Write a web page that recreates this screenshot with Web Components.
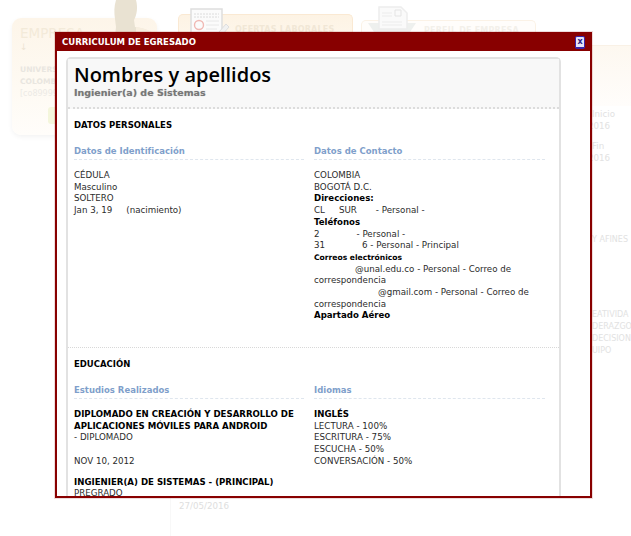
<!DOCTYPE html>
<html lang="es"><head><meta charset="utf-8"><title>Curriculum</title>
<style>
html,body{margin:0;padding:0;background:#fff}
body{width:631px;height:536px;position:relative;overflow:hidden;font:8.7px/11.7px "DejaVu Sans",Verdana,sans-serif;color:#2b2b2b}
b{color:#000;font-size:8.6px}
b.small{font-size:7.6px}
</style></head><body>
<bg-page></bg-page>
<cv-dialog heading="CURRICULUM DE EGRESADO">
  <cv-head name="Nombres y apellidos" title-text="Ingienier(a) de Sistemas"></cv-head>
  <cv-section heading="DATOS PERSONALES" dotted>
    <cv-col heading="Datos de Identificación">
      <div>CÉDULA</div><div>Masculino</div><div>SOLTERO</div>
      <div>Jan 3, 19<gap-x w="14"></gap-x>(nacimiento)</div>
    </cv-col>
    <cv-col heading="Datos de Contacto">
      <div>COLOMBIA</div><div>BOGOTÁ D.C.</div><div><b>Direcciones:</b></div>
      <div>CL<gap-x w="14"></gap-x>SUR<gap-x w="19"></gap-x>- Personal -</div>
      <div><b>Teléfonos</b></div>
      <div>2<gap-x w="37"></gap-x>- Personal -</div>
      <div>31<gap-x w="37"></gap-x>6 - Personal - Principal</div>
      <div><b class="small">Correos electrónicos</b></div>
      <div><gap-x w="41"></gap-x>@unal.edu.co - Personal - Correo de correspondencia</div>
      <div><gap-x w="64"></gap-x>@gmail.com - Personal - Correo de correspondencia</div>
      <div><b>Apartado Aéreo</b></div>
    </cv-col>
  </cv-section>
  <cv-section heading="EDUCACIÓN">
    <cv-col heading="Estudios Realizados">
      <div><b>DIPLOMADO EN CREACIÓN Y DESARROLLO DE APLICACIONES MÓVILES PARA ANDROID</b></div>
      <div>- DIPLOMADO</div>
      <div class="sp">NOV 10, 2012</div>
      <div class="sp2"><b>INGIENIER(A) DE SISTEMAS - (PRINCIPAL)</b></div>
      <div>PREGRADO</div>
    </cv-col>
    <cv-col heading="Idiomas">
      <div><b>INGLÉS</b></div><div>LECTURA - 100%</div><div>ESCRITURA - 75%</div>
      <div>ESCUCHA - 50%</div><div>CONVERSACIÓN - 50%</div>
    </cv-col>
  </cv-section>
</cv-dialog>
<script>
function def(name,css,html){
  customElements.define(name,class extends HTMLElement{
    connectedCallback(){
      if(this.shadowRoot)return;
      const r=this.attachShadow({mode:'open'});
      r.innerHTML='<style>'+css+'</style>'+(typeof html==='function'?html(this):html);
    }
  });
}
def('gap-x',':host{display:inline-block;height:1px}',e=>'<style>:host{width:'+e.getAttribute('w')+'px}</style>');
def('bg-page',`
:host{display:block;position:absolute;inset:0;overflow:hidden;font:8.7px/12px "DejaVu Sans",sans-serif;color:#e2e2e2}
.top{display:flex;align-items:flex-start;padding-left:12px}
.card{width:145px;height:117px;margin-top:18px;box-sizing:border-box;border-radius:9px;background:linear-gradient(#fdf5e9,#fefaf3 60%,#fffdfa);box-shadow:0 2px 5px #f3f3f3;padding:7px 8px;position:relative}
.card h4{margin:0;font:13.5px/16px "DejaVu Sans",sans-serif;color:#f3ead9}
.arrow{margin-top:0;line-height:12px;color:#eee4d4;font-size:9px}
.man{position:absolute;left:102px;top:-18px;width:44px;height:50px}
.tab{height:40px;box-sizing:border-box;border:1px solid #fae9d3;border-bottom:0;border-radius:5px 5px 0 0;background:linear-gradient(#fdf3e4,#fef9f1);position:relative;color:#f1e7d6;font:bold 8px/10px "DejaVu Sans",sans-serif;letter-spacing:.2px;padding:10px 0 0 56px;white-space:nowrap}
.t1{width:175px;margin:14px 0 0 21px}
.t2{width:175px;margin:20px 0 0 8px;background:#fffdfb;border-color:#fbf2e6;color:#f3f0ea;padding:5px 0 0 62px}
.ic{position:absolute;left:11px;top:-7px;width:40px;height:26px}
.t2 .ic{left:6px;top:-16px;width:48px;height:30px}
.rail{position:absolute;left:592px;top:45px;width:39px;height:60px;background:linear-gradient(#fdf8f0,#fffdfb);border-top:1px solid #f9f1e6}
.side{position:absolute;left:592px;top:108px;white-space:nowrap}
.side div{height:12px}
.cut{margin-left:-4px}
.low{font-size:8px}
.date{position:absolute;left:179px;top:500px;color:#dedede}
.vline{position:absolute;left:170px;top:498px;width:1px;height:38px;background:#f8f8f8}
`,`
<div class="top">
  <div class="card"><h4>EMPRESA</h4><div class="arrow">↓</div>
    <svg class="man" viewBox="0 0 44 50"><path d="M2 0h20c2 7 1 15-2 20l1 7c7 1 16 3 20 9l3 14H0l1-14 1-9-1-8C0 13 0 6 2 0z" fill="#e9e2d2"/><path d="M22 27c7 1 16 3 20 9l2 14H22z" fill="#f7eedf"/></svg>
    <div style="margin-top:11px;font-weight:bold;font-size:7.6px;color:#e9e6e0">UNIVERSIDAD</div>
    <div style="font-weight:bold;font-size:7.6px;color:#e9e6e0">COLOMBIA</div>
    <div style="font-size:8px;color:#eceae6">[co89999]</div>
    <div style="position:absolute;left:36px;top:89px;width:14px;height:17px;border-radius:3px;background:#f4f6dc"></div>
  </div>
  <div class="tab t1">
    <svg class="ic" viewBox="0 0 40 26"><path d="M1 1h31v25H1z" fill="#fbfbfb" stroke="#dedede" stroke-width="1.5"/><path d="M4 6h25M4 9h25" stroke="#dcdcdc" stroke-dasharray="2 1"/><circle cx="9" cy="17" r="4.5" fill="none" stroke="#f0b9b4" stroke-width="1.4"/><path d="M16 13h13M16 17h13M16 21h11" stroke="#e8e8e8"/><path d="M29 24l7-8 3 3-7 8z" fill="#f1f1f1" stroke="#dedede"/></svg>OFERTAS LABORALES</div>
  <div class="tab t2">
    <svg class="ic" viewBox="0 0 48 30"><path d="M0 18h48l-8 12H8z" fill="#eef0ee"/><path d="M11 2h22l6 6v16H11z" fill="#fafafa" stroke="#ededed" stroke-width="1.5"/><path d="M14 8h10M14 11h10M14 17h20M14 20h20" stroke="#ececec"/><path d="M27 5h6v6h-6z" fill="none" stroke="#e4e4e4"/></svg>PERFIL DE EMPRESA</div>
</div>
<div class="rail"></div>
<div class="side">
  <div>Inicio</div><div class="cut">2016</div><div style="height:8px"></div><div>Fin</div><div class="cut">2016</div>
  <div style="height:70px"></div><div class="low">Y AFINES</div>
  <div style="height:63px"></div><div class="low">EATIVIDA</div><div class="low">DERAZGO</div><div class="low">DECISION</div><div class="low">UIPO</div>
</div>
<div class="vline"></div>
<div class="date">27/05/2016</div>
`);
def('cv-dialog',`
:host{display:flex;flex-direction:column;position:absolute;left:55px;top:32px;width:537px;height:466px;box-sizing:border-box;border:2px solid #880000;border-top-width:1px;background:#fff;box-shadow:0 0 0 1px rgba(136,0,0,.14);overflow:hidden}
.bar{flex:none;height:18px;background:#880000;display:flex;align-items:center;justify-content:space-between;padding:0 5px;color:#fff;font:bold 8.5px "DejaVu Sans",sans-serif}
.x{width:8px;height:10px;border:1px solid #3a22a8;border-bottom-width:2px;border-radius:2px;background:#e6e4f8;color:#2a1a80;display:flex;align-items:center;justify-content:center;font:bold 8px/1 "DejaVu Sans",sans-serif}
.body{flex:1;min-height:0;overflow:hidden;padding:6px 29px 0 9px}
.card{border:2px solid #e2e2e2;border-bottom:0;border-radius:5px 5px 0 0;height:100%;box-sizing:border-box}
`,e=>`<div class="bar"><span>${e.getAttribute('heading')}</span><span class="x">x</span></div><div class="body"><div class="card"><slot></slot></div></div>`);
def('cv-head',`
:host{display:block;height:50px;box-sizing:border-box;background:#f8f8f8;border-bottom:2px dotted #dcdcdc;padding:4px 6px 0}
.n{font:600 20px/24px "Open Sans","DejaVu Sans",sans-serif;color:#000}
.t{font:bold 9.5px/12px "DejaVu Sans",sans-serif;color:#777;text-shadow:0 0 1px #bbb}
`,e=>`<div class="n">${e.getAttribute('name')}</div><div class="t">${e.getAttribute('title-text')}</div>`);
def('cv-section',`
:host{display:block;box-sizing:border-box;padding:10px 6px 0;font:8.7px/11.7px "DejaVu Sans",sans-serif}
:host([dotted]){height:239px;border-bottom:1px dotted #d8d8d8}
h3{margin:0 0 14px;font:bold 8.5px/12px "DejaVu Sans",sans-serif;color:#000}
.cols{display:grid;grid-template-columns:230px 231px;column-gap:10px}
`,e=>`<h3>${e.getAttribute('heading')}</h3><div class="cols"><slot></slot></div>`);
def('cv-col',`
:host{display:block;min-width:0;color:#2b2b2b}
h4{margin:0 0 10px;padding-bottom:2px;font:bold 8.5px/12px "DejaVu Sans",sans-serif;color:#7f9fcb;border-bottom:1px dashed #dfe6ee}
::slotted(.sp){margin-top:11.7px}
::slotted(.sp2){margin-top:9px}
`,e=>`<h4>${e.getAttribute('heading')}</h4><slot></slot>`);
</script>
</body></html>
